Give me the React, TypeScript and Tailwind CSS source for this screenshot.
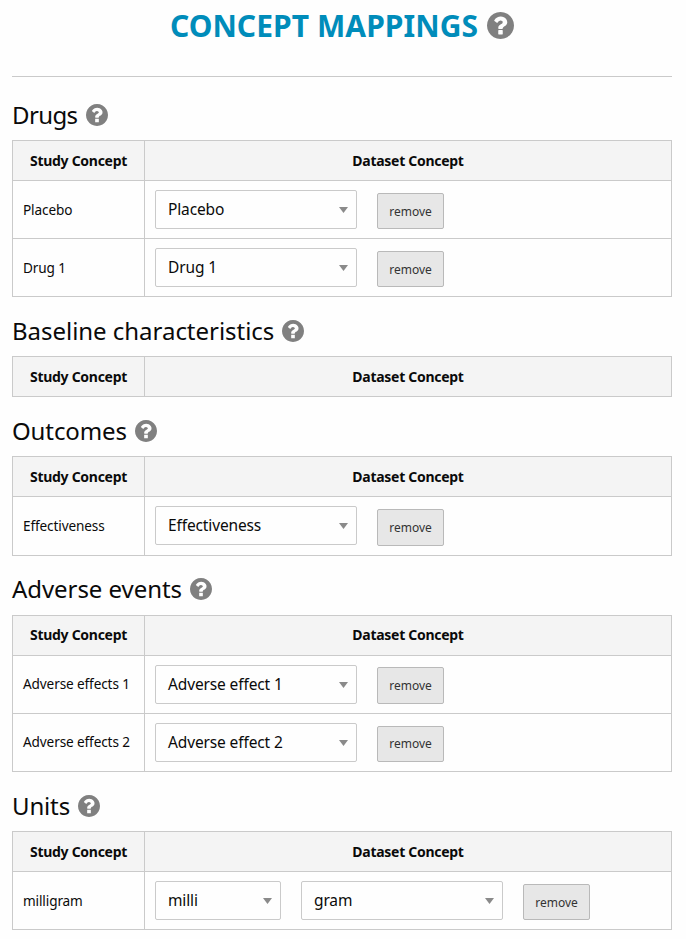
type Row = { name: string; options: { label: string; narrow?: boolean }[]; tall?: boolean; button?: string };
type Section = { title: string; rows: Row[]; gap: string; tracking?: string; raised?: boolean };

const sections: Section[] = [
  {
    title: 'Drugs',
    gap: 'h-[63px]',
    tracking: 'tracking-[-0.6px]',
    rows: [
      { name: 'Placebo', options: [{ label: 'Placebo' }] },
      { name: 'Drug 1', options: [{ label: 'Drug 1' }] },
    ],
  },
  { title: 'Baseline characteristics', gap: 'h-[59px]', tracking: 'tracking-[-0.03px]', rows: [] },
  {
    title: 'Outcomes',
    gap: 'h-[59px]',
    tracking: 'tracking-[-0.12px]',
    rows: [
      {
        name: 'Effectiveness',
        options: [{ label: 'Effectiveness' }],
        tall: true,
        button: 'mt-[3px] h-[37px] pt-0',
      },
    ],
  },
  {
    title: 'Adverse events',
    gap: 'h-[59px]',
    tracking: 'tracking-[-0.06px]',
    raised: true,
    rows: [
      { name: 'Adverse effects 1', options: [{ label: 'Adverse effect 1' }], button: 'mt-0.5 h-[37px] pt-px' },
      { name: 'Adverse effects 2', options: [{ label: 'Adverse effect 2' }], button: 'mt-[3px] h-9 pb-px' },
    ],
  },
  {
    title: 'Units',
    gap: 'h-[59px]',
    tracking: 'tracking-[-0.15px]',
    rows: [{ name: 'milligram', options: [{ label: 'milli', narrow: true }, { label: 'gram' }] }],
  },
];

function Help({ className }: { className: string }) {
  return (
    <svg viewBox="128 128 1536 1536" className={`shrink-0 fill-[#808080] ${className}`}>
      <path d="M1024 1376v-192q0-14-9-23t-23-9h-192q-14 0-23 9t-9 23v192q0 14 9 23t23 9h192q14 0 23-9t9-23zM1280 704q0-88-55.5-163t-138.5-116-170-41q-243 0-371 213-15 24 8 42l132 100q7 6 19 6 16 0 25-12 53-68 86-92 34-24 86-24 48 0 85.5 26t37.5 59q0 38-20 61t-68 45q-63 28-115.5 86.5t-52.5 125.5v36q0 14 9 23t23 9h192q14 0 23-9t9-23q0-19 21.5-49.5t54.5-49.5q32-18 49-28.5t46-35 44.5-48 28-60.5 12.5-81zM1664 896q0 209-103 385.5t-279.5 279.5-385.5 103-385.5-103-279.5-279.5-103-385.5 103-385.5 279.5-279.5 385.5-103 385.5 103 279.5 279.5 103 385.5z" />
    </svg>
  );
}

function Select({ label, narrow }: { label: string; narrow?: boolean }) {
  return (
    <div
      className={`flex h-[39px] items-center justify-between rounded-[2px] border border-[#cacaca] bg-[#fefefe] pr-2 pl-3 ${
        narrow ? 'w-[126px]' : 'w-[202px]'
      }`}
    >
      <span className="pb-0.5 text-[15.5px] leading-6 tracking-[-0.13px]">{label}</span>
      <svg viewBox="0 0 9 6" className="h-1.5 w-[9px] fill-[#8a8a8a]">
        <path d="M0 0h9L4.5 6z" />
      </svg>
    </div>
  );
}

function MappingRow({ row, raised }: { row: Row; raised?: boolean }) {
  return (
    <div className={`flex border-b border-[#cacaca] ${row.tall ? 'h-[59px]' : 'h-[58px]'}`}>
      <div
        className={`flex w-[132px] shrink-0 items-center border-r border-[#cacaca] pl-2.5 text-[13.6px] leading-5 tracking-[-0.12px] ${
          raised ? 'pb-0.5' : ''
        }`}
      >
        {row.name}
      </div>
      <div className="flex items-start gap-5 pt-[9px] pl-2.5">
        {row.options.map((o) => (
          <Select key={o.label} {...o} />
        ))}
        <button
          className={`w-[67px] rounded-[2px] border border-[#b9b9b9] bg-[#e7e7e7] text-[12px] leading-4 text-[#333] ${
            row.button ?? 'mt-[3px] h-9 pt-0.5'
          }`}
        >
          remove
        </button>
      </div>
    </div>
  );
}

export default function App() {
  return (
    <main className="h-[939px] w-[686px] overflow-hidden bg-[#fefefe] pr-3.5 pl-3 font-['Noto_Sans','Open_Sans',sans-serif] text-[#0a0a0a]">
      <header className="flex h-[77px] items-start justify-center border-b border-[#cacaca] pt-[3px]">
        <h1 className="mr-[9px] text-[30px] leading-[46px] font-bold tracking-[0.06px] text-[#008cba]">
          CONCEPT MAPPINGS
        </h1>
        <Help className="mt-[9px] size-[27px]" />
      </header>
      {sections.map((s) => (
        <section key={s.title}>
          <div className={`flex items-end ${s.raised ? 'pb-2' : 'pb-[7px]'} ${s.gap}`}>
            <h2 className={`mr-2 text-[24px] leading-9 ${s.tracking ?? ''}`}>{s.title}</h2>
            <Help className="mb-[7px] size-[22px]" />
          </div>
          <div className="border-x border-t border-[#cacaca]">
            <div className="flex h-10 border-b border-[#cacaca] bg-[#f4f4f4] text-[14px] leading-5 font-bold tracking-[-0.28px]">
              <div
                className={`flex w-[132px] shrink-0 items-center justify-center border-r border-[#cacaca] ${
                  s.raised ? 'pb-0.5' : ''
                }`}
              >
                Study Concept
              </div>
              <div className={`flex grow items-center justify-center ${s.raised ? 'pb-0.5' : ''}`}>
                Dataset Concept
              </div>
            </div>
            {s.rows.map((r) => (
              <MappingRow key={r.name} row={r} raised={s.raised} />
            ))}
          </div>
        </section>
      ))}
    </main>
  );
}
